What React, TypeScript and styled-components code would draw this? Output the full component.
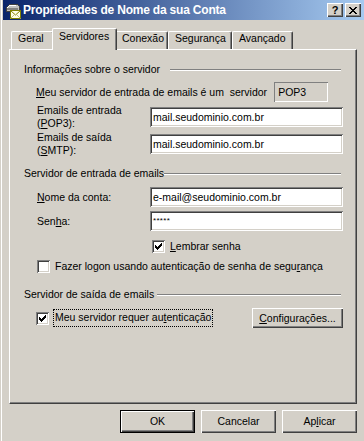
import React from "react";
import styled, { createGlobalStyle, css } from "styled-components";

const Global = createGlobalStyle`
  html, body { margin: 0; padding: 0; background: #D4D0C8; }
  body { font-family: "Liberation Sans", Arial, sans-serif; font-size: 10.5px; color: #000; line-height: 13px; }
  * { box-sizing: border-box; }
`;

const Window = styled.div`
  width: 364px;
  height: 441px;
  background: #D4D0C8;
  box-shadow: inset 1px 0 0 #D4D0C8, inset 2px 0 0 #fff;
  padding-left: 3px;
  display: flex;
  flex-direction: column;
  overflow: hidden;
`;

const TitleBar = styled.div`
  height: 20px;
  flex: none;
  display: flex;
  align-items: center;
  padding: 0 3px 0 1px;
  background: linear-gradient(to right, #0A246A, #A6CAF0);
`;

const TitleText = styled.span`
  flex: 1;
  margin-left: 2px;
  color: #fff;
  font-weight: bold;
  font-size: 12px;
  letter-spacing: -0.2px;
  white-space: nowrap;
`;

const CaptionButton = styled.div<{ $gap?: boolean }>`
  width: 16px;
  height: 14px;
  margin-left: ${(p) => (p.$gap ? 2 : 0)}px;
  background: #D4D0C8;
  display: flex;
  align-items: center;
  justify-content: center;
  box-shadow: inset 1px 1px #fff, inset -1px -1px #404040, inset -2px -2px #808080;
  font-weight: bold;
  font-size: 11px;
  line-height: 11px;
`;

const Body = styled.div`
  flex: 1;
  display: flex;
  flex-direction: column;
  padding: 8px 7px 8px 6px;
`;

const TabStrip = styled.div`
  display: flex;
  align-items: flex-end;
  height: 21px;
  flex: none;
  padding-left: 2px;
`;

const Tab = styled.div<{ $active?: boolean; $w: number }>`
  position: relative;
  flex: none;
  width: ${(p) => p.$w}px;
  height: ${(p) => (p.$active ? 22 : 18)}px;
  margin: 0 ${(p) => (p.$active ? -2 : 0)}px ${(p) => (p.$active ? -1 : 0)}px;
  z-index: ${(p) => (p.$active ? 1 : 0)};
  background: #D4D0C8;
  border-left: 1px solid #fff;
  border-top: 1px solid #fff;
  border-right: 1px solid #404040;
  border-radius: 2px 2px 0 0;
  box-shadow: inset -1px 0 #808080;
  padding: ${(p) => (p.$active ? 1 : 0)}px 0 0 6px;
  white-space: nowrap;
`;

const Panel = styled.div`
  flex: 1;
  border: 1px solid;
  border-color: #fff #404040 #404040 #fff;
  box-shadow: inset -1px -1px #808080;
  padding: 13px 15px 0 14px;
  display: flex;
  flex-direction: column;
`;

const GroupHeader = styled.div<{ $mt: number }>`
  display: flex;
  align-items: center;
  height: 13px;
  margin-top: ${(p) => p.$mt}px;
  white-space: nowrap;
`;

const GroupLine = styled.div<{ $gap: number }>`
  flex: 1;
  height: 2px;
  margin-left: ${(p) => p.$gap}px;
  border-top: 1px solid #808080;
  border-bottom: 1px solid #fff;
`;

const Row = styled.div<{ $mt: number; $h?: number; $indent?: number }>`
  display: flex;
  align-items: center;
  height: ${(p) => p.$h ?? 20}px;
  margin-top: ${(p) => p.$mt}px;
  margin-left: ${(p) => p.$indent ?? 12}px;
  white-space: nowrap;
`;

const SpacedRow = styled(Row)`
  justify-content: space-between;
  margin-right: -2px;
`;

const InlineText = styled.span`
  white-space: pre;
`;

const FieldLabel = styled.div<{ $top?: boolean }>`
  width: 114px;
  flex: none;
  padding-left: 1px;
  align-self: ${(p) => (p.$top ? "flex-start" : "center")};
  margin-top: ${(p) => (p.$top ? -3 : 0)}px;
`;

const StaticBox = styled.div`
  width: 54px;
  height: 20px;
  margin-left: 7px;
  flex: none;
  display: flex;
  align-items: center;
  padding-left: 4px;
  box-shadow: inset 1px 1px #808080, inset -1px -1px #fff;
`;

const Edit = styled.div<{ $password?: boolean }>`
  width: 193px;
  height: 20px;
  flex: none;
  background: #fff;
  box-shadow: inset 1px 1px #808080, inset -1px -1px #fff, inset 2px 2px #404040, inset -2px -2px #D4D0C8;
  padding: 0 3px;
  display: flex;
  align-items: ${(p) => (p.$password ? "flex-start" : "center")};
  padding-top: ${(p) => (p.$password ? 3 : 0)}px;
  font-size: ${(p) => (p.$password ? 8 : 10.5)}px;
  letter-spacing: ${(p) => (p.$password ? 0.3 : 0)}px;
  white-space: nowrap;
`;

const CheckBox = styled.div<{ $ml?: number }>`
  width: 13px;
  height: 13px;
  flex: none;
  margin-left: ${(p) => p.$ml ?? 0}px;
  background: #fff;
  box-shadow: inset 1px 1px #808080, inset -1px -1px #fff, inset 2px 2px #404040, inset -2px -2px #D4D0C8;
  display: flex;
  align-items: center;
  justify-content: center;
`;

const CheckText = styled.span<{ $gap: number }>`
  margin-left: ${(p) => p.$gap}px;
`;

const FocusText = styled.span`
  margin-left: 4px;
  padding: 1px 1px 2px 1px;
  border: 1px dotted #000;
`;

const CheckGroup = styled.div`
  display: flex;
  align-items: center;
`;

const Button = styled.div<{ $default?: boolean; $w?: number; $h?: number }>`
  width: ${(p) => p.$w ?? 75}px;
  height: ${(p) => p.$h ?? 23}px;
  flex: none;
  display: flex;
  align-items: center;
  justify-content: center;
  background: #D4D0C8;
  white-space: nowrap;
  ${(p) =>
    p.$default
      ? css`
          border: 1px solid #000;
          box-shadow: inset 1px 1px #fff, inset -1px -1px #404040, inset -2px -2px #808080;
        `
      : css`
          box-shadow: inset 1px 1px #fff, inset -1px -1px #404040, inset -2px -2px #808080;
        `}
`;

const ButtonRow = styled.div`
  display: flex;
  justify-content: flex-end;
  gap: 6px;
  margin-top: 6px;
  flex: none;
`;

const Key = styled.span`
  text-decoration: underline;
  text-underline-offset: 1px;
`;

const CHECK_PIXELS: [number, number, number][] = [
  [6, 0, 1],
  [5, 1, 2],
  [0, 2, 1],
  [4, 2, 3],
  [0, 3, 2],
  [3, 3, 3],
  [0, 4, 5],
  [1, 5, 3],
  [2, 6, 1],
];

const CheckMark = () => (
  <svg width="7" height="7" viewBox="0 0 7 7" shapeRendering="crispEdges">
    {CHECK_PIXELS.map(([x, y, w], i) => (
      <rect key={i} x={x} y={y} width={w} height={1} fill="#000" />
    ))}
  </svg>
);

const CloseGlyph = () => (
  <svg width="8" height="7" viewBox="0 0 8 7" shapeRendering="crispEdges">
    {Array.from({ length: 7 }).map((_, i) => (
      <React.Fragment key={i}>
        <rect x={i} y={i} width={2} height={1} fill="#000" />
        <rect x={6 - i} y={i} width={2} height={1} fill="#000" />
      </React.Fragment>
    ))}
  </svg>
);

const AccountIcon = () => (
  <svg width="17" height="17" viewBox="0 0 17 17" shapeRendering="crispEdges">
    <path d="M2 6 L6 2 H13 L15 4 V9 H2 Z" fill="#C0C0C0" stroke="#404040" strokeWidth="1" />
    <path d="M3 6 L6 3 H12" fill="none" stroke="#fff" strokeWidth="1" />
    <rect x="3" y="6" width="11" height="2" fill="#808080" />
    <rect x="6.5" y="8.5" width="10" height="8" fill="#FFFFE8" stroke="#808000" strokeWidth="1" />
    <path d="M6.5 8.5 L11.5 13 L16.5 8.5" fill="none" stroke="#808000" strokeWidth="1" shapeRendering="auto" />
    <path d="M6.5 16.5 L10 13 M16.5 16.5 L13 13" fill="none" stroke="#C0C080" strokeWidth="1" shapeRendering="auto" />
  </svg>
);

const tabs = [
  { label: "Geral", w: 43 },
  { label: "Servidores", w: 65, active: true },
  { label: "Conexão", w: 53 },
  { label: "Segurança", w: 64 },
  { label: "Avançado", w: 61 },
];

export default function App() {
  return (
    <>
      <Global />
      <Window>
        <TitleBar>
          <AccountIcon />
          <TitleText>Propriedades de Nome da sua Conta</TitleText>
          <CaptionButton>?</CaptionButton>
          <CaptionButton $gap>
            <CloseGlyph />
          </CaptionButton>
        </TitleBar>
        <Body>
          <TabStrip>
            {tabs.map((t) => (
              <Tab key={t.label} $w={t.w} $active={t.active}>
                {t.label}
              </Tab>
            ))}
          </TabStrip>
          <Panel>
            <GroupHeader $mt={0}>
              Informações sobre o servidor
              <GroupLine $gap={10} />
            </GroupHeader>
            <Row $mt={6}>
              <InlineText>
                <Key>M</Key>eu servidor de entrada de emails é um  servidor
              </InlineText>
              <StaticBox>POP3</StaticBox>
            </Row>
            <Row $mt={5}>
              <FieldLabel $top>
                Emails de entrada
                <br />(<Key>P</Key>OP3):
              </FieldLabel>
              <Edit>mail.seudominio.com.br</Edit>
            </Row>
            <Row $mt={7}>
              <FieldLabel $top>
                Emails de saída
                <br />(<Key>S</Key>MTP):
              </FieldLabel>
              <Edit>mail.seudominio.com.br</Edit>
            </Row>

            <GroupHeader $mt={13}>
              Servidor de entrada de emails
              <GroupLine $gap={0} />
            </GroupHeader>
            <Row $mt={7}>
              <FieldLabel>
                <Key>N</Key>ome da conta:
              </FieldLabel>
              <Edit>e-mail@seudominio.com.br</Edit>
            </Row>
            <Row $mt={4}>
              <FieldLabel>
                Sen<Key>h</Key>a:
              </FieldLabel>
              <Edit $password>*****</Edit>
            </Row>
            <Row $mt={9} $h={13}>
              <CheckBox $ml={116}>
                <CheckMark />
              </CheckBox>
              <CheckText $gap={5}>
                <Key>L</Key>embrar senha
              </CheckText>
            </Row>
            <Row $mt={7} $h={13}>
              <CheckBox $ml={1} />
              <CheckText $gap={5}>
                Fazer logon usando autenticação de senha de segu<Key>r</Key>ança
              </CheckText>
            </Row>

            <GroupHeader $mt={15}>
              Servidor de saída de emails
              <GroupLine $gap={3} />
            </GroupHeader>
            <SpacedRow $mt={7}>
              <CheckGroup>
                <CheckBox>
                  <CheckMark />
                </CheckBox>
                <FocusText>
                  Meu servidor requer au<Key>t</Key>enticação
                </FocusText>
              </CheckGroup>
              <Button $w={91} $h={20}>
                <span>
                  <Key>C</Key>onfigurações...
                </span>
              </Button>
            </SpacedRow>
          </Panel>
          <ButtonRow>
            <Button $default>OK</Button>
            <Button>Cancelar</Button>
            <Button>
              <span>
                Ap<Key>l</Key>icar
              </span>
            </Button>
          </ButtonRow>
        </Body>
      </Window>
    </>
  );
}
